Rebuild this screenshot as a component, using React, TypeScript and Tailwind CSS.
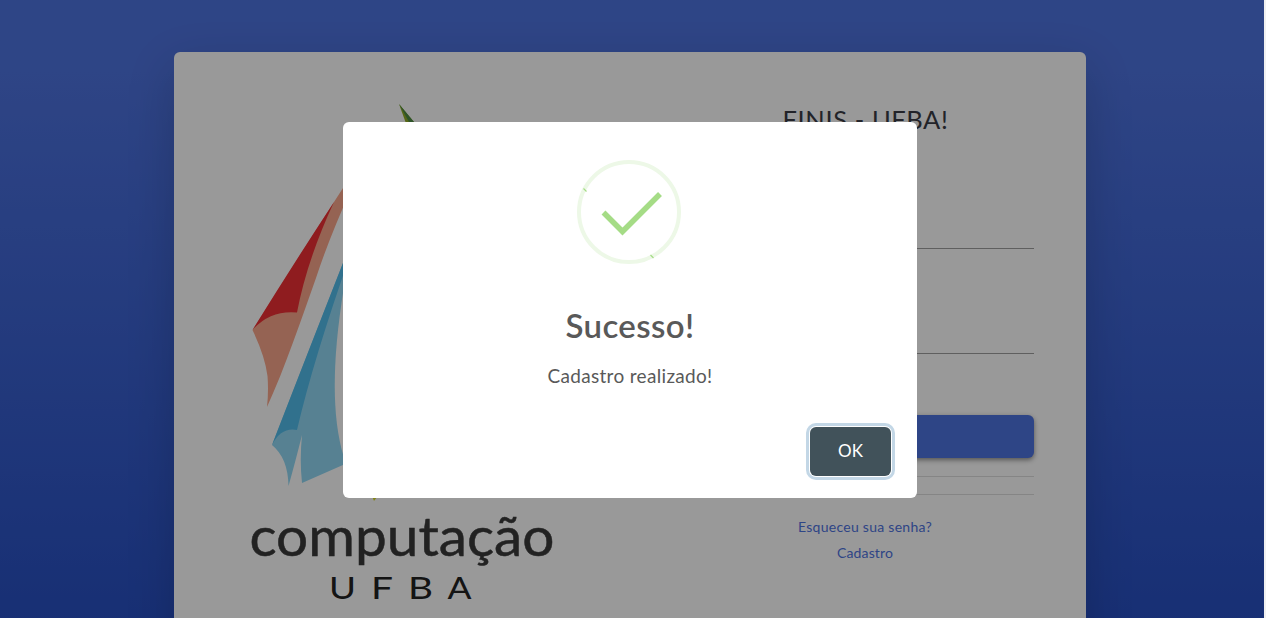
import React from "react";

function ComputacaoLogo() {
  return (
    <svg width="310" height="510" viewBox="248 100 310 510" className="block shrink-0" aria-label="computação UFBA">
      <path d="M399 104L405.500 122H414Z" fill="#8eac26" />
      <path d="M399 104L409 122H414Z" fill="#4c8a45" />
      <path d="M352 174L334 202L252.500 330Q265 356 267.500 376Q268.700 391 267 407C285 368 302 317 316 278Q328 241 352 187Z" fill="#f9a68a" />
      <path d="M334 202Q292 266 252.500 330Q270 310 297 312.500Q307 260 334 202Z" fill="#ee3035" />
      <path d="M352 240L343 263L272 445Q288 458 288.500 486Q295 463 302 435Q299.500 460 302 483L352 461V240Z" fill="#91d8f4" />
      <path d="M352 240Q308 352 272 445Q281 427 297 430Q314 357 352 250Z" fill="#52bdec" />
      <path d="M343.500 290Q326 398 343.500 456L352 456V262Z" fill="#fff" />
      <path d="M372 496L374 501L377 497Z" fill="#d8dc25" />
      <text x="249.500" y="555.500" textLength="305" lengthAdjust="spacingAndGlyphs" fontFamily="Lato, sans-serif" fontSize="54" fontWeight="400" fill="#3a3a3a" stroke="#3a3a3a" strokeWidth="0.500">computação</text>
      <g fontFamily="Lato, sans-serif" fontSize="31" fontWeight="400" fill="#222">
        <text x="329" y="599" textLength="27" lengthAdjust="spacingAndGlyphs">U</text>
        <text x="371" y="599" textLength="22" lengthAdjust="spacingAndGlyphs">F</text>
        <text x="408" y="599" textLength="25" lengthAdjust="spacingAndGlyphs">B</text>
        <text x="447.500" y="599" textLength="24" lengthAdjust="spacingAndGlyphs">A</text>
      </g>
    </svg>
  );
}

function SuccessIcon() {
  return (
    <svg width="104" height="104" viewBox="0 0 104 104" fill="none" className="block">
      <circle cx="52" cy="52" r="50" stroke="#edf8e7" strokeWidth="4" />
      <path d="M26.500 52.500L45.500 71.500L83 34" stroke="#a5dc86" strokeWidth="5.500" />
      <path d="M6.500 28.500l3 3M73.500 95l3 3" stroke="#a5dc86" strokeWidth="1.200" />
    </svg>
  );
}

export default function App() {
  return (
    <div className="relative h-[618px] w-[1266px] overflow-hidden bg-[#f1f1f1] font-['Lato',sans-serif]">
      <div className="h-[700px] w-[1264px] bg-linear-to-b from-[#4e73df] from-10% to-[#224abe] px-[174px] pt-[52px]">
        <main className="flex h-[700px] w-[912px] rounded-md bg-white pt-12 shadow-[0_16px_48px_rgba(0,0,0,0.175)]">
          <div className="w-[523px] pl-[74px]">
            <ComputacaoLogo />
          </div>
          <section className="flex w-[337px] flex-col items-center">
            <h1 className="mt-1 whitespace-nowrap text-[25.500px] leading-[30px] tracking-[0.6px] text-[#3a3b45]">FINIS - UFBA!</h1>
            <div className="mt-[66px] h-[49px] w-full border-b border-[#9f9f9f]" />
            <div className="mt-14 h-[49px] w-full border-b border-[#9f9f9f]" />
            <button aria-label="Login" className="mt-[61px] h-[43px] w-full rounded-md bg-[#4e73df] shadow-[0_2px_5px_rgba(0,0,0,0.45)]" />
            <hr className="mt-[18px] w-full border-[#dedede]" />
            <hr className="mt-[17px] w-full border-[#dedede]" />
            <a className="mt-[22px] whitespace-nowrap pr-px text-sm leading-5 tracking-[0.27px] text-[#4e73df]">Esqueceu sua senha?</a>
            <a className="mt-1.5 whitespace-nowrap pr-px text-sm leading-5 tracking-[0.15px] text-[#4e73df]">Cadastro</a>
          </section>
        </main>
      </div>
      <div className="absolute inset-y-0 left-0 w-[1264px] bg-black/40" />
      <div role="dialog" className="absolute left-[343px] top-[122px] flex h-[376px] w-[574px] flex-col items-center rounded-md bg-white pt-[38px] text-[#595959]">
        <div className="-ml-0.5"><SuccessIcon /></div>
        <h2 className="mt-[41px] whitespace-nowrap text-[33px] font-semibold leading-10 tracking-[0.4px]">Sucesso!</h2>
        <p className="mt-[19px] whitespace-nowrap text-[19px] leading-6 tracking-[0.32px]">Cadastro realizado!</p>
        <button className="mr-[26px] mt-[39px] h-[49px] w-[81px] self-end rounded-md bg-[#41525a] pb-0.5 text-[17px] text-white shadow-[0_0_0_1px_white,0_0_0_4px_#c3d7e6]">OK</button>
      </div>
    </div>
  );
}
